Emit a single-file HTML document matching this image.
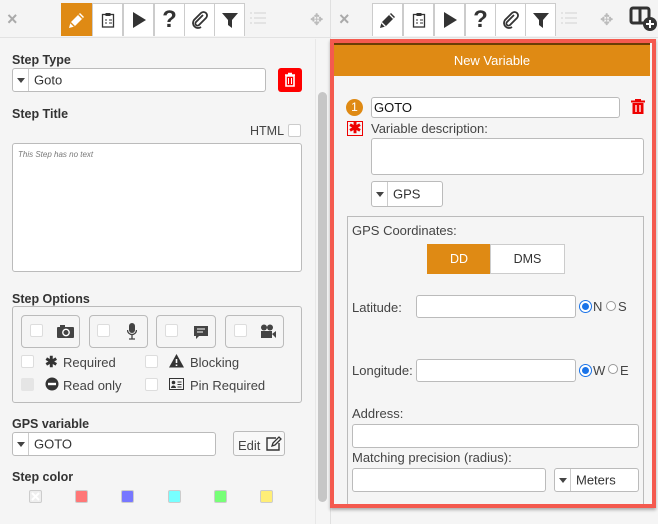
<!DOCTYPE html>
<html><head><meta charset="utf-8"><style>
*{box-sizing:border-box;margin:0;padding:0}
body{width:658px;height:524px;overflow:hidden;background:#f5f5f5;font-family:"Liberation Sans",sans-serif;color:#333;position:relative;font-size:13px}
.a{position:absolute}
.lbl{position:absolute;font-weight:bold;font-size:12.5px;color:#333}
.inp{position:absolute;background:#fff;border:1px solid #bbb;border-radius:3px}
.tab{position:absolute;top:3px;width:31px;height:33px;background:#fff;border:1px solid #ccc;border-bottom:none;display:flex;align-items:center;justify-content:center}
.cb{position:absolute;width:13px;height:13px;background:#fff;border:1px solid #ddd;border-radius:2px}
.txt{position:absolute;font-size:13px;color:#444}
.sw{position:absolute;top:490px;width:13px;height:13px;border:1px solid #ccc;border-radius:2px}
.sel{position:absolute;background:#fff;border:1px solid #bbb;border-radius:3px}
.sel .ar{position:absolute;left:0;top:0;bottom:0;width:16px;border-right:1px solid #ccc}
.sel .ar:after{content:"";position:absolute;left:4px;top:50%;margin-top:-2px;border-left:4px solid transparent;border-right:4px solid transparent;border-top:5px solid #444}
.sel span{position:absolute;left:21px;top:50%;transform:translateY(-50%);font-size:13px;color:#333}
.lst{position:absolute;top:12px;width:16px;height:12px}
</style></head><body>
<div class="a" style="left:0;top:0;width:658px;height:38px;background:#f4f4f4;border-bottom:1px solid #e2e2e2"></div>
<div class="a" style="left:330px;top:0;width:1px;height:524px;background:#e0e0e0"></div>
<!-- left toolbar -->
<div class="a" style="left:7px;top:9px;font-size:18px;color:#aaa;font-weight:bold">×</div>
<div class="tab" style="left:61px;background:#df8a14;border-color:#df8a14"><svg width="20" height="20" viewBox="0 0 20 20"><path d="M2 18l1.5-5.5L13 3l4 4-9.5 9.5z" fill="#fff"/><path d="M3.5 12.5l4 4" stroke="#df8a14" stroke-width="1.3"/><path d="M11.5 4.5l4 4" stroke="#df8a14" stroke-width="1.3"/></svg></div>
<div class="tab" style="left:92px"><svg width="14" height="16" viewBox="0 0 14 16"><rect x="1.5" y="2.5" width="11" height="12.5" fill="none" stroke="#333" stroke-width="1.3"/><rect x="4.5" y="1" width="5" height="3" fill="#333"/><path d="M4 8h2M8 8h3M4 11h2M8 11h3" stroke="#333"/></svg></div>
<div class="tab" style="left:123px"><svg width="16" height="18"><path d="M2 1l13 8-13 8z" fill="#333"/></svg></div>
<div class="tab" style="left:154px;font-size:24px;font-weight:bold;color:#333">?</div>
<div class="tab" style="left:184px"><svg width="18" height="18" viewBox="0 0 18 18"><path d="M12 4l-7 7a2 2 0 0 0 3 3l7-7a3.5 3.5 0 0 0-5-5l-7 7a5 5 0 0 0 7 7" fill="none" stroke="#333" stroke-width="1.8"/></svg></div>
<div class="tab" style="left:214px"><svg width="18" height="18"><path d="M1 2h16l-6 7v8l-4-3v-5z" fill="#333"/></svg></div>
<svg class="lst" style="left:250px" width="16" height="12"><path d="M0 1h2M0 6h2M0 11h2M4 1h12M4 6h12M4 11h12" stroke="#ddd" stroke-width="1.5"/></svg>
<div class="a" style="left:310px;top:10px;color:#bbb;font-size:16px">✥</div>
<!-- right toolbar -->
<div class="a" style="left:339px;top:9px;font-size:18px;color:#aaa;font-weight:bold">×</div>
<div class="tab" style="left:372px"><svg width="20" height="20" viewBox="0 0 20 20"><path d="M2 18l1.5-5.5L13 3l4 4-9.5 9.5z" fill="#333"/><path d="M3.5 12.5l4 4" stroke="#fff" stroke-width="1.3"/><path d="M11.5 4.5l4 4" stroke="#fff" stroke-width="1.3"/></svg></div>
<div class="tab" style="left:403px"><svg width="14" height="16" viewBox="0 0 14 16"><rect x="1.5" y="2.5" width="11" height="12.5" fill="none" stroke="#333" stroke-width="1.3"/><rect x="4.5" y="1" width="5" height="3" fill="#333"/><path d="M4 8h2M8 8h3M4 11h2M8 11h3" stroke="#333"/></svg></div>
<div class="tab" style="left:434px"><svg width="16" height="18"><path d="M2 1l13 8-13 8z" fill="#333"/></svg></div>
<div class="tab" style="left:465px;font-size:24px;font-weight:bold;color:#333">?</div>
<div class="tab" style="left:495px"><svg width="18" height="18" viewBox="0 0 18 18"><path d="M12 4l-7 7a2 2 0 0 0 3 3l7-7a3.5 3.5 0 0 0-5-5l-7 7a5 5 0 0 0 7 7" fill="none" stroke="#333" stroke-width="1.8"/></svg></div>
<div class="tab" style="left:525px"><svg width="18" height="18"><path d="M1 2h16l-6 7v8l-4-3v-5z" fill="#333"/></svg></div>
<svg class="lst" style="left:561px" width="16" height="12"><path d="M0 1h2M0 6h2M0 11h2M4 1h12M4 6h12M4 11h12" stroke="#ddd" stroke-width="1.5"/></svg>
<div class="a" style="left:600px;top:10px;color:#bbb;font-size:16px">✥</div>
<svg class="a" style="left:629px;top:6px" width="29" height="26"><rect x="2" y="2" width="18" height="15" rx="2" fill="none" stroke="#333" stroke-width="3"/><path d="M11 2v15" stroke="#333" stroke-width="3"/><circle cx="21" cy="18" r="7" fill="#333"/><path d="M21 14v8M17 18h8" stroke="#fff" stroke-width="2"/></svg>

<!-- left panel -->
<div class="lbl" style="left:12px;top:53px">Step Type</div>
<div class="sel" style="left:12px;top:68px;width:254px;height:24px"><div class="ar"></div><span>Goto</span></div>
<div class="a" style="left:278px;top:68px;width:24px;height:24px;background:#f00;border-radius:3px"><svg width="24" height="24"><path d="M7 7h10M10 5.5h4M8 8h8v10h-8z" fill="none" stroke="#fff" stroke-width="1.6"/><path d="M10.5 10v6M13.5 10v6" stroke="#fff"/></svg></div>
<div class="lbl" style="left:12px;top:107px">Step Title</div>
<div class="txt" style="left:250px;top:124px;font-size:12.5px">HTML</div>
<div class="cb" style="left:288px;top:124px;border-color:#ccc"></div>
<div class="inp" style="left:12px;top:143px;width:290px;height:129px"></div>
<div class="a" style="left:18px;top:150px;font-size:8px;font-style:italic;color:#777">This Step has no text</div>
<div class="lbl" style="left:12px;top:292px">Step Options</div>
<div class="a" style="left:12px;top:306px;width:290px;height:97px;border:1px solid #bbb;border-radius:3px"></div>
<div class="a" style="left:21px;top:315px;width:59px;height:33px;border:1px solid #bbb;border-radius:4px"></div>
<div class="a" style="left:89px;top:315px;width:59px;height:33px;border:1px solid #bbb;border-radius:4px"></div>
<div class="a" style="left:156px;top:315px;width:60px;height:33px;border:1px solid #bbb;border-radius:4px"></div>
<div class="a" style="left:225px;top:315px;width:59px;height:33px;border:1px solid #bbb;border-radius:4px"></div>
<div class="cb" style="left:30px;top:324px"></div><div class="cb" style="left:97px;top:324px"></div><div class="cb" style="left:165px;top:324px"></div><div class="cb" style="left:234px;top:324px"></div>
<svg class="a" style="left:57px;top:324px" width="18" height="14"><rect x="0" y="3" width="17" height="11" rx="1" fill="#444"/><rect x="3" y="1" width="5" height="3" fill="#444"/><circle cx="9" cy="8.5" r="3.2" fill="none" stroke="#fff" stroke-width="1.4"/></svg>
<svg class="a" style="left:127px;top:323px" width="10" height="17"><rect x="2" y="0" width="6" height="10" rx="3" fill="#444"/><path d="M0.5 7a4.5 4.5 0 0 0 9 0M5 12v4M2 16h6" fill="none" stroke="#444" stroke-width="1.3"/></svg>
<svg class="a" style="left:193px;top:325px" width="16" height="15"><path d="M1 1h14v10h-9l-3 3v-3h-2z" fill="#444"/><path d="M4 4h8M4 7h6" stroke="#fff"/></svg>
<svg class="a" style="left:260px;top:324px" width="17" height="15"><circle cx="4" cy="3.5" r="3" fill="#444"/><circle cx="10" cy="3.5" r="3" fill="#444"/><rect x="1" y="7" width="11" height="7" fill="#444"/><path d="M12 10l4-3v7z" fill="#444"/></svg>
<div class="cb" style="left:21px;top:355px"></div>
<div class="txt" style="left:45px;top:353px;font-size:15px;font-weight:bold;color:#333">✱</div>
<div class="txt" style="left:63px;top:355px">Required</div>
<div class="cb" style="left:145px;top:355px"></div>
<svg class="a" style="left:169px;top:354px" width="15" height="14"><path d="M7.5 0l7.5 13.5h-15z" fill="#333"/><path d="M7.5 5v4M7.5 10.5v1.5" stroke="#fff" stroke-width="1.6"/></svg>
<div class="txt" style="left:190px;top:355px">Blocking</div>
<div class="cb" style="left:21px;top:378px;background:#e5e5e5;border-color:#e5e5e5"></div>
<svg class="a" style="left:45px;top:377px" width="14" height="14"><circle cx="7" cy="7" r="6.5" fill="#333"/><path d="M3 7h8" stroke="#fff" stroke-width="2.4"/></svg>
<div class="txt" style="left:63px;top:378px">Read only</div>
<div class="cb" style="left:145px;top:378px"></div>
<svg class="a" style="left:169px;top:378px" width="15" height="12"><rect x="0.5" y="0.5" width="14" height="11" fill="none" stroke="#333"/><circle cx="4.5" cy="4.5" r="1.8" fill="#333"/><path d="M2 10a2.5 2.5 0 0 1 5 0z" fill="#333"/><path d="M8.5 4h4M8.5 6.5h4M8.5 9h4" stroke="#333"/></svg>
<div class="txt" style="left:190px;top:378px">Pin Required</div>
<div class="lbl" style="left:12px;top:417px">GPS variable</div>
<div class="sel" style="left:12px;top:432px;width:204px;height:24px"><div class="ar"></div><span>GOTO</span></div>
<div class="a" style="left:233px;top:431px;width:52px;height:25px;border:1px solid #bbb;border-radius:3px;background:#f8f8f8"></div>
<div class="txt" style="left:238px;top:438px">Edit</div>
<svg class="a" style="left:266px;top:436px" width="16" height="15"><path d="M10 2h-9v12h12v-7" fill="none" stroke="#333" stroke-width="1.4"/><path d="M6 10l1-3 6-6 2 2-6 6z" fill="none" stroke="#333" stroke-width="1.3"/></svg>
<div class="lbl" style="left:12px;top:470px">Step color</div>
<div class="sw" style="left:29px;background:#eee"><svg width="11" height="11" style="display:block"><path d="M2 2l7 7M9 2l-7 7" stroke="#fff" stroke-width="2"/></svg></div>
<div class="sw" style="left:75px;background:#f77"></div>
<div class="sw" style="left:121px;background:#77f"></div>
<div class="sw" style="left:168px;background:#7ff"></div>
<div class="sw" style="left:214px;background:#7f7"></div>
<div class="sw" style="left:260px;background:#fe7"></div>
<div class="a" style="left:315px;top:39px;width:1px;height:485px;background:#e8e8e8"></div>
<div class="a" style="left:318px;top:92px;width:9px;height:410px;background:#c6c6c6;border-radius:5px"></div>

<!-- right panel -->
<div class="a" style="left:330px;top:39px;width:326px;height:469px;border:4px solid #f45a4f;box-shadow:0 2px 3px rgba(0,0,0,.3)"></div>
<div class="a" style="left:334px;top:43px;width:316px;height:33px;background:#df8a14;border-top:2px solid #6b3d05;color:#fff;text-align:center;line-height:31px;font-size:13px">New Variable</div>
<div class="a" style="left:346px;top:99px;width:17px;height:17px;border-radius:50%;background:#df8a14;color:#fff;font-size:12px;text-align:center;line-height:17px">1</div>
<div class="inp" style="left:371px;top:97px;width:249px;height:21px"></div>
<div class="txt" style="left:374px;top:100px;color:#111">GOTO</div>
<svg class="a" style="left:631px;top:99px" width="14" height="15"><path d="M0 2.5h14M4 1h6" stroke="#e00" stroke-width="2"/><path d="M1.5 4h11v11h-11z" fill="#e00"/><path d="M5 6v7M9 6v7" stroke="#fff" stroke-width="1.3"/></svg>
<div class="a" style="left:347px;top:121px;width:16px;height:15px;border:1.5px solid #e00;color:#e00;font-size:15px;line-height:13px;text-align:center;font-weight:bold">✱</div>
<div class="txt" style="left:371px;top:121px">Variable description:</div>
<div class="inp" style="left:371px;top:138px;width:273px;height:37px"></div>
<div class="sel" style="left:371px;top:181px;width:72px;height:26px"><div class="ar"></div><span>GPS</span></div>
<div class="a" style="left:347px;top:216px;width:297px;height:288px;border:1px solid #bbb;border-bottom:none"></div>
<div class="txt" style="left:352px;top:223px">GPS Coordinates:</div>
<div class="a" style="left:427px;top:244px;width:64px;height:30px;background:#df8a14;color:#fff;text-align:center;line-height:30px;font-size:12.5px">DD</div>
<div class="a" style="left:490px;top:244px;width:75px;height:30px;background:#fff;border:1px solid #ccc;text-align:center;line-height:28px;font-size:12.5px">DMS</div>
<div class="txt" style="left:352px;top:300px">Latitude:</div>
<div class="inp" style="left:416px;top:295px;width:160px;height:23px"></div>
<div class="a" style="left:580px;top:301px;width:11px;height:11px;border-radius:50%;background:#1a73e8;border:2px solid #fff;box-shadow:0 0 0 1px #1a73e8"></div>
<div class="txt" style="left:593px;top:299px">N</div>
<div class="a" style="left:606px;top:301px;width:10px;height:10px;border-radius:50%;border:1px solid #999;background:#fff"></div>
<div class="txt" style="left:618px;top:299px">S</div>
<div class="txt" style="left:352px;top:363px">Longitude:</div>
<div class="inp" style="left:416px;top:359px;width:160px;height:23px"></div>
<div class="a" style="left:580px;top:365px;width:11px;height:11px;border-radius:50%;background:#1a73e8;border:2px solid #fff;box-shadow:0 0 0 1px #1a73e8"></div>
<div class="txt" style="left:593px;top:363px">W</div>
<div class="a" style="left:608px;top:364px;width:10px;height:10px;border-radius:50%;border:1px solid #999;background:#fff"></div>
<div class="txt" style="left:620px;top:363px">E</div>
<div class="txt" style="left:352px;top:406px">Address:</div>
<div class="inp" style="left:352px;top:424px;width:287px;height:24px"></div>
<div class="txt" style="left:352px;top:450px">Matching precision (radius):</div>
<div class="inp" style="left:352px;top:468px;width:194px;height:24px"></div>
<div class="sel" style="left:554px;top:468px;width:85px;height:24px"><div class="ar"></div><span>Meters</span></div>
</body></html>
